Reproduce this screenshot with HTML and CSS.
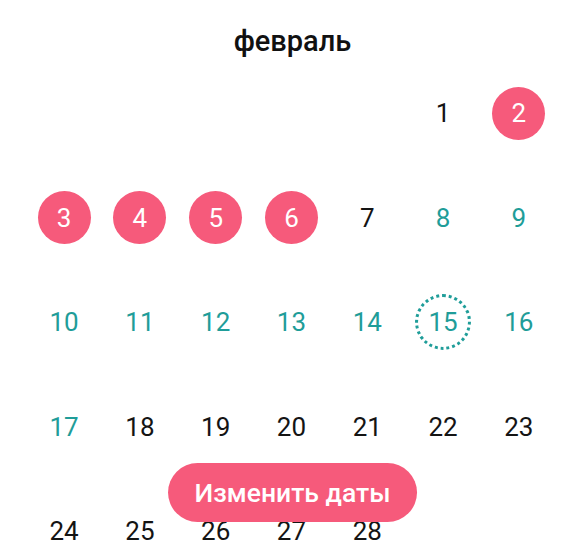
FILE: index.html
```html
<!DOCTYPE html>
<html lang="ru">
<head>
<meta charset="utf-8">
<link rel="stylesheet" href="styles.css">
</head>
<body>
<div class="page">
  <div class="title">февраль</div>
  <div class="grid">
    <div class="cell"></div><div class="cell"></div><div class="cell"></div><div class="cell"></div><div class="cell"></div>
    <div class="cell"><span class="day">1</span></div>
    <div class="cell"><span class="day sel">2</span></div>

    <div class="cell"><span class="day sel">3</span></div>
    <div class="cell"><span class="day sel">4</span></div>
    <div class="cell"><span class="day sel">5</span></div>
    <div class="cell"><span class="day sel">6</span></div>
    <div class="cell"><span class="day">7</span></div>
    <div class="cell"><span class="day teal">8</span></div>
    <div class="cell"><span class="day teal">9</span></div>

    <div class="cell"><span class="day teal">10</span></div>
    <div class="cell"><span class="day teal">11</span></div>
    <div class="cell"><span class="day teal">12</span></div>
    <div class="cell"><span class="day teal">13</span></div>
    <div class="cell"><span class="day teal">14</span></div>
    <div class="cell"><span class="day teal today">15</span></div>
    <div class="cell"><span class="day teal">16</span></div>

    <div class="cell"><span class="day teal">17</span></div>
    <div class="cell"><span class="day">18</span></div>
    <div class="cell"><span class="day">19</span></div>
    <div class="cell"><span class="day">20</span></div>
    <div class="cell"><span class="day">21</span></div>
    <div class="cell"><span class="day">22</span></div>
    <div class="cell"><span class="day">23</span></div>

    <div class="cell"><span class="day">24</span></div>
    <div class="cell"><span class="day">25</span></div>
    <div class="cell"><span class="day">26</span></div>
    <div class="cell"><span class="day">27</span></div>
    <div class="cell"><span class="day">28</span></div>
    <div class="cell"></div>
    <div class="cell"></div>
  </div>
  <button class="change">Изменить даты</button>
</div>
</body>
</html>
```
FILE: styles.css
```css
html, body {
  margin: 0;
  padding: 0;
  height: 560px;
  overflow: hidden;
  background: #ffffff;
}
body {
  font-family: Roboto, "Noto Sans", sans-serif;
  color: #141414;
}
.page {
  position: relative;
  height: 560px;
}
.title {
  padding-top: 25px;
  height: 32px;
  line-height: 32px;
  margin-bottom: 4px;
  text-align: center;
  font-size: 29px;
  font-weight: 500;
  color: #111111;
}
.grid {
  display: grid;
  grid-template-columns: repeat(7, 75.8px);
  grid-auto-rows: 104.5px;
  justify-content: center;
  padding-right: 2px;
}
.cell {
  display: flex;
  align-items: center;
  justify-content: center;
}
.day {
  width: 53px;
  height: 53px;
  border-radius: 50%;
  display: flex;
  align-items: center;
  justify-content: center;
  font-size: 26px;
  line-height: 1;
  box-sizing: border-box;
}
.teal {
  color: #1f9d99;
}
.sel {
  background: #f65a7b;
  color: #ffffff;
}
.today {
  width: 56px;
  height: 56px;
  border: 3px dotted #1f9d99;
}
.change {
  position: absolute;
  left: 50%;
  bottom: 38px;
  transform: translateX(-50%);
  height: 59px;
  padding: 0 27px;
  border: none;
  border-radius: 30px;
  background: #f65a7b;
  color: #ffffff;
  font-family: Roboto, "Noto Sans", sans-serif;
  font-size: 26.5px;
  font-weight: 500;
  white-space: nowrap;
}
```
